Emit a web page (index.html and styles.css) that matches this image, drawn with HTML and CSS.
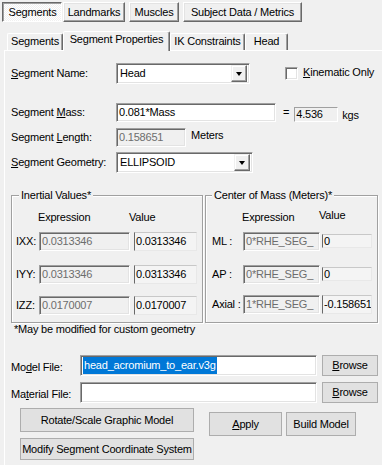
FILE: index.html
```html
<!DOCTYPE html>
<html>
<head>
<meta charset="utf-8">
<link rel="stylesheet" href="styles.css">
</head>
<body>
<div class="toptabs">
  <div class="ttab pressed w1">Segments</div>
  <div class="ttab w2">Landmarks</div>
  <div class="ttab w3">Muscles</div>
  <div class="ttab w4">Subject Data / Metrics</div>
</div>
<div class="tabstrip">
  <div class="tab t1">Segments</div>
  <div class="tab sel t2">Segment Properties</div>
  <div class="tab t3">IK Constraints</div>
  <div class="tab t4">Head</div>
</div>
<div class="panel">
  <div class="row r-name">
    <div class="lbl"><u>S</u>egment Name:</div>
    <div class="combo c-name"><span class="ctext">Head</span><span class="ddbtn"><span class="tri"></span></span></div>
    <div class="chk"></div>
    <div class="chklbl"><u>K</u>inematic Only</div>
  </div>
  <div class="row r-mass">
    <div class="lbl">Segment <u>M</u>ass:</div>
    <div class="field f-mass">0.081*Mass</div>
    <div class="eq">=</div>
    <div class="static s-kgs">4.536</div>
    <div class="unit">kgs</div>
  </div>
  <div class="row r-len">
    <div class="lbl">Segment <u>L</u>ength:</div>
    <div class="field dis f-len">0.158651</div>
    <div class="unit2">Meters</div>
  </div>
  <div class="row r-geo">
    <div class="lbl"><u>S</u>egment Geometry:</div>
    <div class="combo c-geo"><span class="ctext">ELLIPSOID</span><span class="ddbtn"><span class="tri"></span></span></div>
  </div>
  <div class="groups">
    <fieldset class="grp g-in">
      <legend>Inertial Values*</legend>
      <div class="ggrid in-grid">
        <div></div><div class="hd">Expression</div><div class="hd">Value</div>
        <div class="glbl">IXX:</div><div class="field dis gexp">0.0313346</div><div class="val">0.0313346</div>
        <div class="glbl">IYY:</div><div class="field dis gexp">0.0313346</div><div class="val">0.0313346</div>
        <div class="glbl">IZZ:</div><div class="field dis gexp">0.0170007</div><div class="val">0.0170007</div>
      </div>
    </fieldset>
    <fieldset class="grp g-com">
      <legend>Center of Mass (Meters)*</legend>
      <div class="ggrid com-grid">
        <div></div><div class="hd hd-exp">Expression</div><div class="hd hd-val">Value</div>
        <div class="glbl">ML :</div><div class="field dis gexp">0*RHE_SEG_</div><div class="val short">0</div>
        <div class="glbl">AP :</div><div class="field dis gexp">0*RHE_SEG_</div><div class="val short">0</div>
        <div class="glbl">Axial :</div><div class="field dis gexp">1*RHE_SEG_</div><div class="val">-0.158651</div>
      </div>
    </fieldset>
  </div>
  <div class="note">*May be modified for custom geometry</div>
  <div class="row r-file r-model">
    <div class="lbl2">Mo<u>d</u>el File:</div>
    <div class="field f-file"><span class="selected">head_acromium_to_ear.v3g</span></div>
    <div class="btn b-browse"><u>B</u>rowse</div>
  </div>
  <div class="row r-file r-mat">
    <div class="lbl2">Ma<u>t</u>erial File:</div>
    <div class="field f-file"></div>
    <div class="btn b-browse"><u>B</u>rowse</div>
  </div>
  <div class="bottom">
    <div class="bcol">
      <div class="btn b-rot">Rotate/Scale Graphic Model</div>
      <div class="btn b-mod">Modify Segment Coordinate System</div>
    </div>
    <div class="btn b-apply"><u>A</u>pply</div>
    <div class="btn b-build">Build Model</div>
  </div>
</div>
</body>
</html>
```
FILE: styles.css
```css
* { box-sizing: border-box; }
body {
  margin: 0;
  background: #f0f0f0;
  font-family: "Liberation Sans", Arial, sans-serif;
  font-size: 11px;
  letter-spacing: -0.2px;
  line-height: 13px;
  color: #000;
  width: 382px;
  height: 465px;
  overflow: hidden;
}
u { text-decoration: underline; text-underline-offset: 1px; }

/* top button tabs */
.toptabs { display: flex; padding: 2px 0 0 2px; height: 22px; }
.ttab {
  height: 20px;
  display: flex; align-items: center; justify-content: center;
  background: #f0f0f0;
  border: 1px solid;
  border-color: #fff #696969 #696969 #fff;
  box-shadow: inset -1px -1px #a0a0a0, inset 1px 1px #e3e3e3;
  white-space: nowrap;
}
.ttab.pressed {
  border-color: #696969 #fff #fff #696969;
  box-shadow: inset 1px 1px #a0a0a0;
  background: conic-gradient(#ffffff 90deg, #f0f0f0 90deg 180deg, #ffffff 180deg 270deg, #f0f0f0 270deg);
  background-size: 2px 2px;
  padding: 1px 0 0 1px;
}
.w1 { width: 60px; }
.w2 { width: 62px; margin-left: 1px; }
.w3 { width: 50px; margin-left: 4px; }
.w4 { width: 119px; margin-left: 4px; }

/* inner tabs */
.tabstrip { display: flex; align-items: flex-end; height: 19px; margin-top: 9px; padding-left: 7px; }
.tab {
  height: 17px;
  display: flex; align-items: center; justify-content: center;
  border: 1px solid; border-bottom: none;
  border-color: #fff #696969 transparent #fff;
  box-shadow: inset -1px 0 #a0a0a0;
  border-radius: 2px 2px 0 0;
  padding-bottom: 1px;
  white-space: nowrap;
}
.tab.sel {
  height: 20px; margin-bottom: -1px;
  background: #f0f0f0;
  position: relative; z-index: 1;
  padding-bottom: 4px;
}
.t1 { width: 56px; }
.t2 { width: 107px; }
.t3 { width: 75px; }
.t4 { width: 43px; }

.panel {
  border-top: 1px solid #fff;
  border-left: 1px solid #fff;
  margin-left: 4px;
  padding-left: 6px;
  height: 415px;
}

.row { display: flex; align-items: center; }
.lbl { width: 105px; }
.r-name { margin-top: 12px; height: 21px; }
.r-mass { margin-top: 19px; height: 19px; }
.r-len { margin-top: 6px; height: 19px; }
.r-geo { margin-top: 5px; height: 21px; }

.field, .combo {
  background: #fff;
  border: 1px solid;
  border-color: #a0a0a0 #fff #fff #a0a0a0;
  box-shadow: inset 1px 1px #696969, inset -1px -1px #e3e3e3;
  height: 100%;
  display: flex; align-items: center;
  padding-left: 2px;
  white-space: nowrap; overflow: hidden;
}
.field.dis { background: #f0f0f0; color: #6d6d6d; }
.combo { padding: 0 2px 0 3px; }
.ctext { flex: 1; }
.c-name { width: 134px; }
.c-geo { width: 137px; }
.ddbtn {
  width: 16px; height: 17px;
  background: #f0f0f0;
  border: 1px solid;
  border-color: #f0f0f0 #696969 #696969 #f0f0f0;
  box-shadow: inset -1px -1px #a0a0a0, inset 1px 1px #fff;
  display: flex; align-items: center; justify-content: center;
}
.tri { width: 0; height: 0; border-left: 3.5px solid transparent; border-right: 3.5px solid transparent; border-top: 4px solid #000; margin-top: 1px; }

.chk {
  width: 13px; height: 13px; margin-left: 35px;
  background: #fff;
  border: 1px solid;
  border-color: #a0a0a0 #fff #fff #a0a0a0;
  box-shadow: inset 1px 1px #696969, inset -1px -1px #e3e3e3;
  align-self: flex-start; margin-top: 4px;
}
.chklbl { margin-left: 5px; align-self: flex-start; margin-top: 3px; }

.f-mass { width: 160px; }
.eq { margin-left: 7px; }
.static {
  margin-left: 5px; width: 44px; height: 15px;
  border: 1px solid; border-color: #a0a0a0 #fff #fff #a0a0a0;
  padding-left: 1px; display: flex; align-items: center;
  margin-top: 4px;
}
.unit { margin-left: 4px; margin-top: 5px; }
.f-len { width: 70px; }
.unit2 { margin-left: 5px; margin-top: -4px; }

/* groups */
.groups { display: flex; margin-top: 16px; height: 134px; }
.grp {
  margin: 0; padding: 0; min-width: 0;
  border: 1px solid #a0a0a0;
  box-shadow: inset 1px 1px #fff, 1px 1px #fff;
  height: 134px;
}
.grp legend { padding: 0 2px; background: #f0f0f0; line-height: 13px; }
.g-in { width: 192px; }
.g-in legend { margin-left: 7px; }
.g-com { width: 173px; margin-left: 2px; }
.g-com legend { margin-left: 6px; }

.ggrid { display: grid; align-items: end; margin-top: 9px; }
.ggrid .hd { margin-left: -1px; }
.in-grid {
  grid-template-columns: 23px 91px 67px;
  padding-left: 4px;
  grid-template-rows: 13px 27px 33px 31px;
}
.in-grid .val { margin-left: 4px; }
.com-grid {
  grid-template-columns: 31px 77px 52px;
  padding-left: 6px;
  grid-template-rows: 13px 27px 33px 30px;
}
.com-grid .val { margin-left: 2px; }
.hd-val { margin-top: -2px; align-self: start; }
.glbl { height: 19px; display: flex; align-items: center; white-space: nowrap; }
.gexp { height: 19px; }
.val {
  height: 19px;
  background: #f4f4f4;
  border-left: 1px solid #696969;
  border-top: 1px solid #c8c8c8;
  border-bottom: 1px solid #e8e8e8;
  border-right: 1px solid #e8e8e8;
  display: flex; align-items: center; padding-left: 1px;
  white-space: nowrap; overflow: hidden;
}
.val.short { height: 14px; margin-bottom: 3px; }

.note { padding-left: 3px; height: 13px; }

.r-file { height: 21px; }
.r-model { margin-top: 19px; }
.r-mat { margin-top: 6px; }
.lbl2 { width: 69px; margin-top: 4px; }
.f-file { width: 237px; }
.selected { background: #0078d7; color: #fff; line-height: 17px; padding: 0 1px; }

.btn {
  background: #e1e1e1;
  border: 1px solid #adadad;
  display: flex; align-items: center; justify-content: center;
  white-space: nowrap;
}
.b-browse { width: 56px; height: 21px; margin-left: 5px; }

.bottom { display: flex; margin-top: 5px; align-items: flex-start; }
.bcol { display: flex; flex-direction: column; gap: 6px; margin-left: 9px; width: 174px; }
.b-rot { height: 24px; }
.b-mod { height: 22px; }
.b-apply { width: 73px; height: 24px; margin-left: 15px; margin-top: 4px; }
.b-build { width: 70px; height: 24px; margin-left: 4px; margin-top: 4px; }
```
